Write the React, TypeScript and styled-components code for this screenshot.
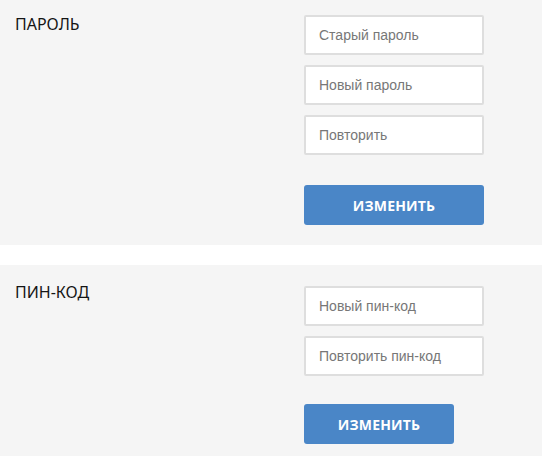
import React from "react";
import styled, { createGlobalStyle } from "styled-components";

const Global = createGlobalStyle`
  html, body { margin: 0; padding: 0; background: #ffffff; }
  body { font-family: "Noto Sans", "Open Sans", sans-serif; }
  * { box-sizing: border-box; }
`;

const Page = styled.div`
  display: flex;
  flex-direction: column;
  gap: 20px;
`;

const Section = styled.section<{ $top: number; $height: number }>`
  display: grid;
  grid-template-columns: 289px 180px;
  align-items: start;
  padding: ${(p) => p.$top}px 0 0 15px;
  height: ${(p) => p.$height}px;
  background: #f5f5f5;
`;

const Label = styled.div<{ $shift: number }>`
  font-family: "Noto Sans", "Open Sans", sans-serif;
  font-size: 16px;
  line-height: 18px;
  color: #151515;
  margin-top: ${(p) => p.$shift}px;
`;

const Form = styled.div`
  display: flex;
  flex-direction: column;
  gap: 10px;
`;

const Input = styled.input`
  width: 180px;
  height: 40px;
  padding: 0 13px;
  border: 2px solid #dedede;
  border-radius: 2px;
  background: #ffffff;
  font-family: "Liberation Sans", Arial, sans-serif;
  font-size: 14px;
  color: #333;
  outline: none;
  &::placeholder { color: #777777; }
`;

const Button = styled.button<{ $width: number; $space: number }>`
  margin-top: ${(p) => p.$space}px;
  width: ${(p) => p.$width}px;
  height: 40px;
  border: none;
  border-radius: 3px;
  background: #4a86c7;
  color: #ffffff;
  font-family: "Open Sans", "Noto Sans", sans-serif;
  font-weight: 700;
  font-size: 14px;
  letter-spacing: 0.2px;
  cursor: pointer;
`;

export default function App() {
  return (
    <>
      <Global />
      <Page>
        <Section $top={15} $height={245}>
          <Label $shift={0}>ПАРОЛЬ</Label>
          <Form>
            <Input placeholder="Старый пароль" type="password" />
            <Input placeholder="Новый пароль" type="password" />
            <Input placeholder="Повторить" type="password" />
            <Button $width={180} $space={20}>ИЗМЕНИТЬ</Button>
          </Form>
        </Section>
        <Section $top={21} $height={191}>
          <Label $shift={-3}>ПИН-КОД</Label>
          <Form>
            <Input placeholder="Новый пин-код" type="password" />
            <Input placeholder="Повторить пин-код" type="password" />
            <Button $width={150} $space={18}>ИЗМЕНИТЬ</Button>
          </Form>
        </Section>
      </Page>
    </>
  );
}
